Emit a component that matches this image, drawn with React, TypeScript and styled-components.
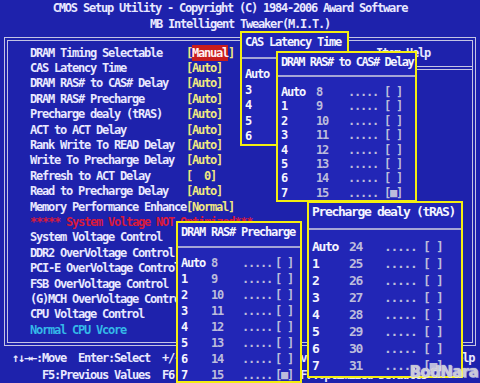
import React from "react";
import styled, { createGlobalStyle } from "styled-components";

const color = {
  BLUE: "#1e22ac",
  POPUP: "#2226b6",
  TEXT: "#e8e8ff",
  DIM: "#bcbcdc",
  VALUE: "#f0e880",
  ALERT: "#d81a3c",
  INFO: "#34b8e8",
  HILITE: "#c81c1c",
  LINE: "#c4c4e4",
  YELLOW: "#f4ee10",
};

const spacing = (cw: number, fs: number) => `${(cw - fs * 0.602).toFixed(2)}px`;

const GlobalStyle = createGlobalStyle`
  html, body {
    margin: 0;
    padding: 0;
    background: ${color.BLUE};
  }
`;

const Screen = styled.div`
  position: relative;
  width: 480px;
  height: 383px;
  overflow: hidden;
  background: ${color.BLUE};
  color: ${color.TEXT};
  font-family: "DejaVu Sans Mono", "Liberation Mono", monospace;
  font-size: 12px;
  font-weight: bold;
  letter-spacing: -1.22px;
  white-space: pre;
`;

const Header = styled.header`
  display: flex;
  flex-direction: column;
  align-items: center;
  height: 37px;
  line-height: 16px;
`;

const HeaderLine = styled.div<{ $shift?: number }>`
  margin-right: ${(p) => p.$shift ?? 0}px;
`;

const Frame = styled.div`
  margin: 0 4px;
  height: 309px;
  box-sizing: border-box;
  border: 4px double ${color.LINE};
  display: grid;
  grid-template-columns: 1fr 142px;
`;

const ItemList = styled.div`
  padding: 4.5px 0 0 22px;
  line-height: 15.4px;
`;

const Row = styled.div`
  display: grid;
  grid-template-columns: 156px auto;
`;

const Label = styled.span<{ $tone?: "alert" | "info" }>`
  color: ${(p) =>
    p.$tone === "alert" ? color.ALERT : p.$tone === "info" ? color.INFO : color.TEXT};
`;

const Value = styled.span`
  color: ${color.VALUE};
`;

const Selected = styled.span`
  background: ${color.HILITE};
  color: #fff0f0;
  padding: 1px 0;
`;

const HelpPanel = styled.div`
  border-left: 4px double ${color.LINE};
`;

const HelpTitle = styled.div`
  height: 25px;
  line-height: 25px;
  text-align: center;
  border-bottom: 4px double ${color.LINE};
`;

const Footer = styled.footer`
  padding-top: 3.5px;
  line-height: 17px;
`;

const FooterLine = styled.div<{ $indent: number }>`
  padding-left: ${(p) => p.$indent}px;
`;

const Popup = styled.div<{
  $x: number;
  $y: number;
  $w: number;
  $h?: number;
  $fs: number;
  $cw: number;
}>`
  position: absolute;
  left: ${(p) => p.$x}px;
  top: ${(p) => p.$y}px;
  width: ${(p) => p.$w}px;
  height: ${(p) => (p.$h ? `${p.$h}px` : "auto")};
  overflow: ${(p) => (p.$h ? "hidden" : "visible")};
  box-sizing: border-box;
  border: 2px solid ${color.YELLOW};
  background: ${color.POPUP};
  font-size: ${(p) => p.$fs}px;
  letter-spacing: ${(p) => spacing(p.$cw, p.$fs)};
`;

const PopupTitle = styled.div<{ $pb: number; $spacing?: string }>`
  line-height: 18px;
  padding: 0 0 ${(p) => p.$pb}px 3px;
  color: #f4f4ff;
  ${(p) => (p.$spacing ? `letter-spacing: ${p.$spacing};` : "")}
`;

const Separator = styled.div`
  height: 2px;
  background: ${color.DIM};
  opacity: 0.85;
`;

const Options = styled.div<{ $cols: string; $gap: number; $pt: number; $pb: number }>`
  display: grid;
  grid-template-columns: ${(p) => p.$cols};
  row-gap: ${(p) => p.$gap}px;
  line-height: 10px;
  padding: ${(p) => p.$pt}px 0 ${(p) => p.$pb}px 3px;
`;

const OptLabel = styled.span`
  color: #f4f4ff;
`;

const OptDim = styled.span`
  color: ${color.DIM};
`;

const Watermark = styled.div`
  position: absolute;
  right: 2px;
  bottom: 2px;
  font-family: "DejaVu Sans", sans-serif;
  font-size: 15px;
  font-weight: bold;
  letter-spacing: -0.6px;
  color: rgba(190, 190, 205, 0.8);
  text-shadow: 0 0 1px #ffffff, 1px 1px 0 rgba(255, 255, 255, 0.5);
`;

type Item = { label: string; value?: string; tone?: "alert" | "info"; manual?: boolean };

const items: Item[] = [
  { label: "DRAM Timing Selectable", manual: true },
  { label: "CAS Latency Time", value: "[Auto]" },
  { label: "DRAM RAS# to CAS# Delay", value: "[Auto]" },
  { label: "DRAM RAS# Precharge", value: "[Auto]" },
  { label: "Precharge dealy (tRAS)", value: "[Auto]" },
  { label: "ACT to ACT Delay", value: "[Auto]" },
  { label: "Rank Write To READ Delay", value: "[Auto]" },
  { label: "Write To Precharge Delay", value: "[Auto]" },
  { label: "Refresh to ACT Delay", value: "[  0]" },
  { label: "Read to Precharge Delay", value: "[Auto]" },
  { label: "Memory Performance Enhance", value: "[Normal]" },
  { label: "***** System Voltage NOT Optimized***", tone: "alert" },
  { label: "System Voltage Control" },
  { label: "DDR2 OverVoltage Control" },
  { label: "PCI-E OverVoltage Control" },
  { label: "FSB OverVoltage Control" },
  { label: "(G)MCH OverVoltage Control" },
  { label: "CPU Voltage Control" },
  { label: "Normal CPU Vcore", tone: "info" },
];

interface Menu {
  title: string;
  x: number;
  y: number;
  w: number;
  h?: number;
  fs: number;
  cw: number;
  titleCw?: number;
  titlePb: number;
  pt: number;
  gap: number;
  pb: number;
  cols: number[];
  labels: string[];
  start?: number;
}

const menus: Menu[] = [
  {
    title: "CAS Latency Time", x: 240, y: 31, w: 109, fs: 12, cw: 6, titlePb: 6,
    pt: 10, gap: 5.5, pb: 3, cols: [], labels: ["Auto", "3", "4", "5", "6"],
  },
  {
    title: "DRAM RAS# to CAS# Delay", x: 276, y: 51, w: 141, fs: 12, cw: 6, titleCw: 5.75,
    titlePb: 4, pt: 10, gap: 4.4, pb: 2, cols: [35, 32, 36], start: 8,
    labels: ["Auto", "1", "2", "3", "4", "5", "6", "7"],
  },
  {
    title: "DRAM RAS# Precharge", x: 176, y: 221, w: 126, h: 162, fs: 12, cw: 6, titlePb: 5,
    pt: 10, gap: 6, pb: 0, cols: [30, 31, 33], start: 8,
    labels: ["Auto", "1", "2", "3", "4", "5", "6", "7"],
  },
  {
    title: "Precharge dealy (tRAS)", x: 307, y: 201, w: 156, fs: 13, cw: 6.5, titlePb: 7,
    pt: 12, gap: 7, pb: 5, cols: [37, 35, 39], start: 24,
    labels: ["Auto", "1", "2", "3", "4", "5", "6", "7"],
  },
];

const OptionMenu: React.FC<{ menu: Menu }> = ({ menu }) => {
  const cols = menu.cols.length ? menu.cols.map((c) => `${c}px`).join(" ") + " auto" : "auto";
  return (
    <Popup $x={menu.x} $y={menu.y} $w={menu.w} $h={menu.h} $fs={menu.fs} $cw={menu.cw}>
      <PopupTitle
        $pb={menu.titlePb}
        $spacing={menu.titleCw ? spacing(menu.titleCw, menu.fs) : undefined}
      >
        {menu.title}
      </PopupTitle>
      <Separator />
      <Options $cols={cols} $gap={menu.gap} $pt={menu.pt} $pb={menu.pb}>
        {menu.labels.map((l, i) =>
          menu.start === undefined ? (
            <OptLabel key={l}>{l}</OptLabel>
          ) : (
            <React.Fragment key={l}>
              <OptLabel>{l}</OptLabel>
              <OptDim>{menu.start + i}</OptDim>
              <OptDim>.....</OptDim>
              <OptDim>{i === menu.labels.length - 1 ? "[■]" : "[ ]"}</OptDim>
            </React.Fragment>
          )
        )}
      </Options>
    </Popup>
  );
};

const App: React.FC = () => (
  <Screen>
    <GlobalStyle />
    <Header>
      <HeaderLine $shift={20}>CMOS Setup Utility - Copyright (C) 1984-2006 Award Software</HeaderLine>
      <HeaderLine>MB Intelligent Tweaker(M.I.T.)</HeaderLine>
    </Header>
    <Frame>
      <ItemList>
        {items.map((it) => (
          <Row key={it.label}>
            <Label $tone={it.tone}>{it.label}</Label>
            {it.manual ? (
              <Value>
                [<Selected>Manual</Selected>]
              </Value>
            ) : (
              it.value && <Value>{it.value}</Value>
            )}
          </Row>
        ))}
      </ItemList>
      <HelpPanel>
        <HelpTitle>Item Help</HelpTitle>
      </HelpPanel>
    </Frame>
    <Footer>
      <FooterLine $indent={12}>↑↓→←:Move  Enter:Select  +/-/PU/PD:Value  F10:Save  ESC:Exit  F1:General Help</FooterLine>
      <FooterLine $indent={42}>F5:Previous Values  F6:Fail-Safe Defaults  F7:Optimized Defaults</FooterLine>
    </Footer>
    {menus.map((m) => (
      <OptionMenu key={m.title} menu={m} />
    ))}
    <Watermark>BodNara</Watermark>
  </Screen>
);

export default App;
